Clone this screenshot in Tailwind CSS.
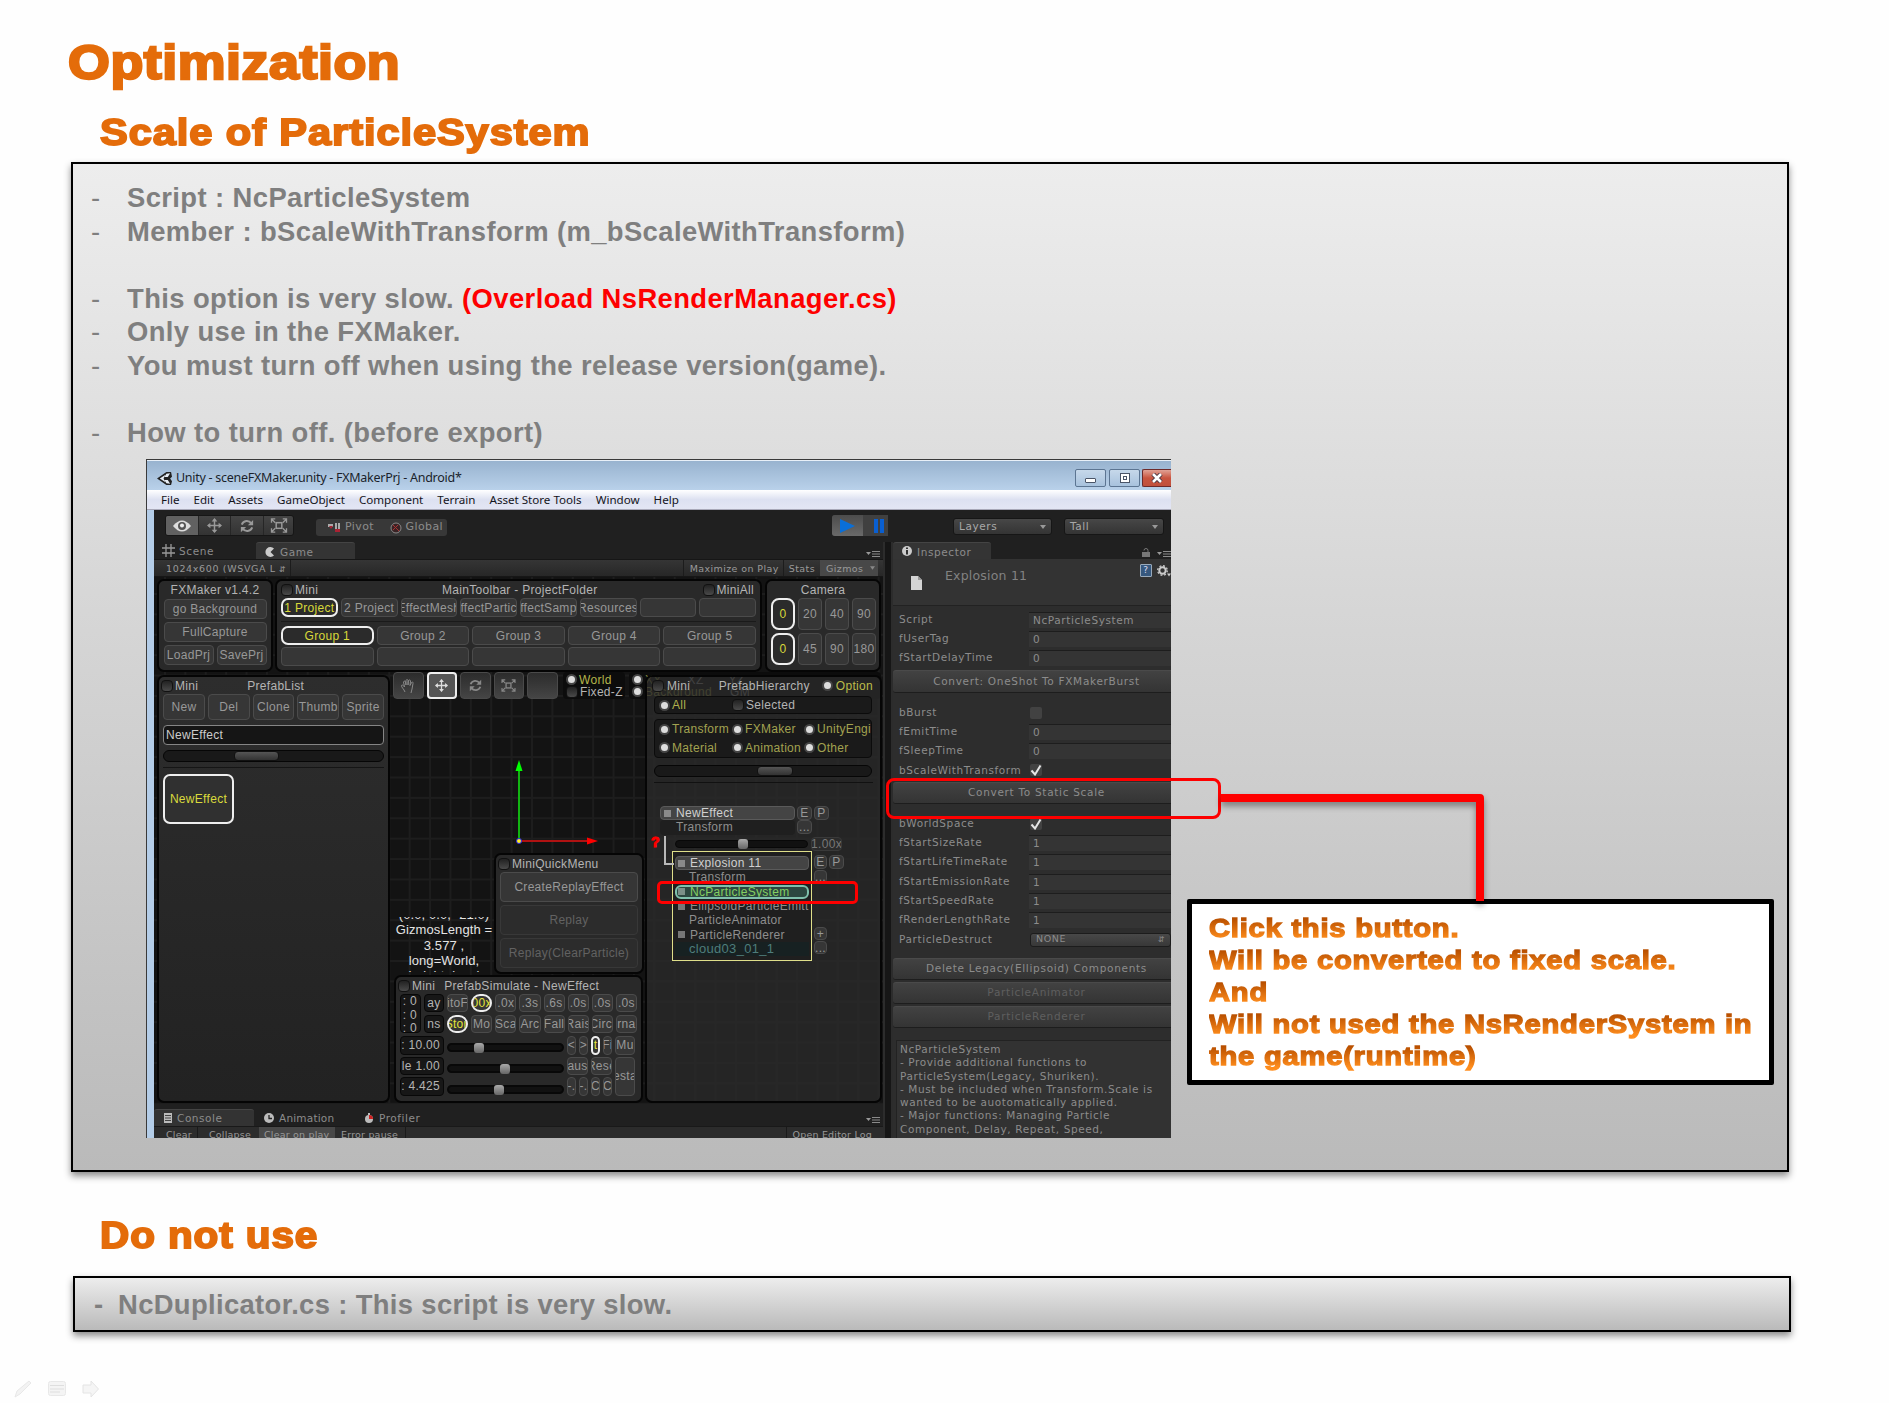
<!DOCTYPE html>
<html lang="en">
<head>
<meta charset="utf-8">
<title>Optimization</title>
<script src="https://cdn.jsdelivr.net/npm/@tailwindcss/browser@4"></script>
</head>
<body class="relative w-[1889px] h-[1403px] overflow-hidden bg-[#fefefe] font-['Liberation_Sans',sans-serif]">
<svg class="hidden">
  <symbol id="move" viewBox="0 0 16 16"><path d="M8 1v14M1 8h14" stroke="currentColor" stroke-width="1.6"/><path d="M8 0l3 3.6H5zM8 16l3-3.600H5zM0 8l3.600-3v6zM16 8l-3.600-3v6z" fill="currentColor"/></symbol>
  <symbol id="rot" viewBox="0 0 16 16"><path d="M2 6.500C4 1.500 10 1 13 5M14 9.500C12 14.500 6 15 3 11" fill="none" stroke="currentColor" stroke-width="2.200"/><path d="M15 1v6H9zM1 15V9h6z" fill="currentColor"/></symbol>
  <symbol id="scale" viewBox="0 0 18 16"><rect x="6" y="5" width="6" height="6" fill="none" stroke="currentColor" stroke-width="1.600"/><path d="M1 5V1h4M13 1h4v4M17 11v4h-4M5 15H1v-4M1 1l4 4M17 1l-4 4M17 15l-4-4M1 15l4-4" fill="none" stroke="currentColor" stroke-width="1.400"/></symbol>
  <symbol id="menu" viewBox="0 0 14 8"><path d="M0 2h5L2.500 5z" fill="#999"/><path d="M6 1.500h8M6 4h8M6 6.500h8" stroke="#8a8a8a" stroke-width="1.200"/></symbol>
  <symbol id="check" viewBox="0 0 12 12"><path d="M1.500 6.500L5 10.500 10.500 1.500" fill="none" stroke="#e6e6e6" stroke-width="2"/></symbol>
</svg>

<h1 class="ml-[68px] mt-[39px] h-[48px] w-max origin-left scale-x-[1.12] whitespace-nowrap text-[48px] leading-[48px] font-bold tracking-[0.5px] text-[#e46c0a] [-webkit-text-stroke:2.4px_#e46c0a]">Optimization</h1>
<h2 class="ml-[100px] mt-[26px] h-[40px] w-max origin-left scale-x-[1.155] whitespace-nowrap text-[36px] leading-[40px] font-bold tracking-[0.8px] text-[#e46c0a] [-webkit-text-stroke:1.8px_#e46c0a]">Scale of ParticleSystem</h2>

<section class="ml-[71px] mt-[9px] h-[1010px] w-[1718px] border-2 border-black bg-linear-to-b from-[#ededed] to-[#bababa] pt-[17px] shadow-[0_4px_7px_rgba(0,0,0,0.45)]">
  <ul class="h-[278px] whitespace-nowrap text-[27.400px] leading-[33.6px] font-bold tracking-[0.4px] text-[#7f7f7f] [&>li]:flex [&>li>i]:w-[36px] [&>li>i]:shrink-0 [&>li>i]:font-normal [&>li>i]:not-italic pl-[18px]">
    <li><i>-</i><span>Script : NcParticleSystem</span></li>
    <li><i>-</i><span>Member : bScaleWithTransform (m_bScaleWithTransform)</span></li>
    <li class="h-[33.6px]"></li>
    <li><i>-</i><span>This option is very slow. <span class="text-[#fe0000]">(Overload NsRenderManager.cs)</span></span></li>
    <li><i>-</i><span>Only use in the FXMaker.</span></li>
    <li><i>-</i><span>You must turn off when using the release version(game).</span></li>
    <li class="h-[33.6px]"></li>
    <li><i>-</i><span>How to turn off. (before export)</span></li>
  </ul>

  <!-- Unity editor window -->
  <div class="ml-[73px] flex h-[679px] w-[1025px] flex-col overflow-hidden border-l border-t border-[#3a3a3a] bg-[#b4cde8] whitespace-nowrap">
    <div class="flex h-[30px] shrink-0 items-center border-t border-[#e8f0f8] bg-linear-to-b from-[#98b3cf] to-[#b9d1ea] pl-[10px]">
      <svg class="mt-[5px] size-[15px]" viewBox="0 0 16 16"><path d="M0 8L10 1l5 0 1 5-2 2 2 3-1 4-5 0z" fill="#222"/><path d="M3 8l6-4-2 4 2 4zM10 3l4-.500-2.500 4H8zM10 13l4 .500-2.500-4H8z" fill="#e8eef5"/></svg>
      <span class="ml-[4px] mt-[6px] font-['Noto_Sans',sans-serif] text-[12.500px] tracking-[-0.27px] text-[#1a1f2b]">Unity - sceneFXMaker.unity - FXMakerPrj - Android*</span>
      <div class="ml-auto flex gap-[2px] pt-[5px]">
        <span class="flex h-[18px] w-[31px] items-center justify-center rounded-[2px] border border-[#5c7592] bg-linear-to-b from-[#c6d8ea] to-[#a8c2dd] pt-1"><i class="h-[5px] w-[11px] rounded-[1px] border border-[#4a5568] bg-white"></i></span>
        <span class="ml-px flex h-[18px] w-[31px] items-center justify-center rounded-[2px] border border-[#5c7592] bg-linear-to-b from-[#c6d8ea] to-[#a8c2dd]"><i class="flex size-[10px] items-center justify-center border border-[#4a5568] bg-white"><i class="h-1 w-1 border border-[#4a5568]"></i></i></span>
        <span class="flex h-[18px] w-[29px] items-center justify-center rounded-l-[2px] border border-r-0 border-[#6d2a2a] bg-linear-to-b from-[#e0a195] via-[#c8543f] to-[#c0503c]"><svg class="h-[10px] w-[12px]" viewBox="0 0 12 10"><path d="M2 1l8 8M10 1L2 9" stroke="#4a3540" stroke-width="4.500"/><path d="M2 1l8 8M10 1L2 9" stroke="#fff" stroke-width="2.600"/></svg></span>
      </div>
    </div>
    <div class="flex h-[20px] shrink-0 items-center gap-[14px] border-b border-[#a8a8b8] bg-linear-to-b from-white via-[#dde1f1] to-[#e3e6f4] pl-[14px] font-['Noto_Sans',sans-serif] text-[11.600px] tracking-[0px] text-[#15151c]">
      <span>File</span><span>Edit</span><span>Assets</span><span>GameObject</span><span>Component</span><span>Terrain</span><span>Asset Store Tools</span><span>Window</span><span>Help</span>
    </div>

    <div class="ml-[7px] flex h-[628px] flex-col bg-[#202020] font-['DejaVu_Sans',sans-serif] text-[11px] text-[#8c8c8c]">
      <!-- main toolbar -->
      <div class="flex h-[32px] shrink-0 items-start pl-[11px] pt-[5px]">
        <div class="flex h-[21px] w-[129px] overflow-hidden rounded-[3px] border border-[#161616] bg-linear-to-b from-[#444] to-[#333] text-[#999] [&>span]:flex [&>span]:w-[32.500px] [&>span]:shrink-0 [&>span]:items-center [&>span]:justify-center [&>span]:border-r [&>span]:border-[#262626]">
          <span class="bg-[#616161]"><svg class="h-[12px] w-[18px]" viewBox="0 0 18 12"><path d="M0 6Q9-5 18 6 9 17 0 6z" fill="#ddd"/><circle cx="9" cy="6" r="4" fill="#555"/><circle cx="9" cy="5.500" r="2" fill="#eee"/></svg></span>
          <span><svg class="size-[15px]"><use href="#move"/></svg></span>
          <span><svg class="size-[14px]"><use href="#rot"/></svg></span>
          <span><svg class="h-[15px] w-[18px]"><use href="#scale"/></svg></span>
        </div>
        <div class="ml-[22px] mt-[4px] flex h-[17px] w-[131px] items-center rounded-[3px] bg-[#383838] text-[11px] tracking-[0.4px]">
          <svg class="ml-[12px] h-[10px] w-[13px]" viewBox="0 0 13 10"><path d="M0 1h5v3H0zM7 0h2v6H7zM10 0h2v6h-2z" fill="#aaa"/><path d="M1 3h4L3 6zM7 6h5v3H7z" fill="#a23"/></svg>
          <span class="ml-[4px]">Pivot</span>
          <svg class="ml-auto size-[12px]" viewBox="0 0 12 12"><circle cx="6" cy="6" r="5" fill="#3a2224" stroke="#8a8a8a"/><path d="M3 3l6 6M3 8l5-5" stroke="#a33"/></svg>
          <span class="ml-[4px] mr-[4px]">Global</span>
        </div>
        <div class="ml-[385px] flex h-[21px] w-[56px] overflow-hidden rounded-l-[3px] bg-[#404040]">
          <span class="flex w-[31px] items-center justify-center bg-linear-to-b from-[#4c4c4c] to-[#6a6a6a]"><svg class="h-[14px] w-[15px]" viewBox="0 0 15 14"><path d="M0 0l15 7-15 7z" fill="#0a6fd8"/></svg></span>
          <span class="flex w-[25px] items-center justify-center gap-[2px] pl-[7px]"><i class="h-[14px] w-[4px] bg-[#0a5fd0]"></i><i class="h-[14px] w-[4px] bg-[#0a5fd0]"></i></span>
        </div>
        <div class="ml-[65px] mt-[3px] flex h-[17px] w-[99px] items-center justify-between rounded-[3px] border border-[#161616] bg-linear-to-b from-[#474747] to-[#343434] px-[5px] text-[10.500px] tracking-[0.6px] text-[#a8a8a8]">Layers<svg class="h-[4px] w-[6px]" viewBox="0 0 6 4"><path d="M0 0h6L3 4z" fill="#999"/></svg></div>
        <div class="ml-[12px] mt-[3px] flex h-[17px] w-[100px] items-center justify-between rounded-[3px] border border-[#161616] bg-linear-to-b from-[#474747] to-[#343434] px-[5px] text-[10.500px] tracking-[0.6px] text-[#a8a8a8]">Tall<svg class="h-[4px] w-[6px]" viewBox="0 0 6 4"><path d="M0 0h6L3 4z" fill="#999"/></svg></div>
      </div>

      <div class="flex h-[596px]">
        <!-- game column -->
        <div class="flex w-[729px] shrink-0 flex-col">
          <div class="flex h-[17px] shrink-0 items-end text-[10.500px] tracking-[0.6px]">
            <div class="flex h-[17px] w-[102px] items-center pl-[8px] pt-[2px]"><svg class="-mt-[2px] mr-[4px] size-[13px]" viewBox="0 0 13 13"><path d="M4 0v13M9 0v13M0 4h13M0 9h13" stroke="#999" stroke-width="1.300"/></svg>Scene</div>
            <div class="flex h-[17px] w-[99px] items-center rounded-t-[3px] border-t border-[#444] bg-[#343434] pl-[9px] pt-[3px]"><svg class="-mt-[2px] mr-[5px] size-[10px]" viewBox="0 0 10 10"><path d="M9 1.500A5 5 0 1 0 9 8.500L5.500 5z" fill="#ccc"/></svg>Game</div>
            <svg class="mb-[1px] ml-auto mr-[3px] h-[8px] w-[14px]"><use href="#menu"/></svg>
          </div>
          <div class="flex h-[18px] shrink-0 items-stretch border-y border-[#161616] bg-linear-to-b from-[#353535] to-[#272727] pr-[5px] text-[9.500px] leading-[17px] tracking-[0.4px] text-[#9a9a9a]">
            <span class="w-[137px] border-r border-[#1c1c1c] pl-[12px] tracking-[0.65px]">1024x600 (WSVGA L<span class="ml-[3px] text-[8px]">&#8693;</span></span>
            <span class="ml-auto border-l border-[#1c1c1c] pl-[6px] pr-[4px]">Maximize on Play</span>
            <span class="border-l border-[#1c1c1c] px-[5px]">Stats</span>
            <span class="flex w-[58px] items-center bg-[#484848] pl-[6px]">Gizmos<svg class="ml-auto mr-[3px] h-[4px] w-[5px]" viewBox="0 0 6 4"><path d="M0 0h6L3 4z" fill="#888"/></svg></span>
          </div>

          <!-- game view: free-floating tool windows -->
          <div class="relative h-[527px] shrink-0 overflow-hidden bg-[#131313] bg-[linear-gradient(#1d1d1d_2px,transparent_2px),linear-gradient(90deg,#1d1d1d_2px,transparent_2px)] bg-[size:20.400px_20.400px] bg-[position:10px_16px] font-['Liberation_Sans',sans-serif] text-[12px] tracking-[0.3px] text-[#b4b4b4] [&_button]:overflow-hidden [&_button]:rounded-[4px] [&_button]:border [&_button]:border-[#4b4b4b] [&_button]:bg-[#363636] [&_button]:flex [&_button]:items-center [&_button]:justify-center [&_button]:whitespace-nowrap [&_button]:text-[#989898] [&_section]:rounded-[7px] [&_section]:border-2 [&_section]:border-[#050505] [&_section]:bg-[#292929] [&_.tog]:size-[12px] [&_.tog]:shrink-0 [&_.tog]:rounded-[4px] [&_.tog]:border [&_.tog]:border-[#111] [&_.tog]:bg-linear-to-b [&_.tog]:from-[#222] [&_.tog]:to-[#4a4a4a] [&_.dot]:size-[11px] [&_.dot]:shrink-0 [&_.dot]:rounded-full [&_.dot]:border-2 [&_.dot]:border-[#444] [&_.dot]:bg-[#ddd]">

            <section class="absolute left-[3px] top-[2px] flex h-[93px] w-[116px] flex-col items-center px-[4px] leading-[18px]">
              <span>FXMaker v1.4.2</span>
              <button class="h-[20px] w-[103px]">go Background</button>
              <button class="mt-[3px] h-[20px] w-[103px]">FullCapture</button>
              <div class="mt-[3px] flex gap-[3px]"><button class="h-[20px] w-[50px]">LoadPrj</button><button class="h-[20px] w-[50px]">SavePrj</button></div>
            </section>

            <section class="absolute left-[121px] top-[2px] h-[93px] w-[487px] px-[4px]">
              <div class="flex h-[17px] items-center"><i class="tog"></i><span class="ml-[2px] w-[147px]">Mini</span><span>MainToolbar - ProjectFolder</span><i class="tog ml-auto"></i><span class="mx-[2px]">MiniAll</span></div>
              <div class="grid h-[19px] grid-cols-8 gap-x-[3px]">
                <button class="border-2! border-[#eee]! rounded-[7px]! text-[#d8d83a]! bg-[#2b2b2b]!">1 Project</button><button>2 Project</button><button>EffectMesh</button><button>ffectPartic</button><button>ffectSamp</button><button>Resources</button><button></button><button></button>
              </div>
              <div class="mt-[4px] h-[5px] border-t border-[#1a1a1a]"></div>
              <div class="grid grid-cols-5 gap-x-[3px] gap-y-[2px] [&>button]:h-[19px]">
                <button class="border-2! border-[#eee]! rounded-[7px]! text-[#d8d83a]! bg-[#2b2b2b]!">Group 1</button><button>Group 2</button><button>Group 3</button><button>Group 4</button><button>Group 5</button>
                <button></button><button></button><button></button><button></button><button></button>
              </div>
            </section>

            <section class="absolute left-[611px] top-[2px] h-[93px] w-[116px] px-[4px] text-center">
              <div class="h-[17px] leading-[18px]">Camera</div>
              <div class="grid grid-cols-[repeat(4,24px)] gap-[3px] [&>button]:h-[32px]">
                <button class="border-2! border-[#eee]! rounded-[8px]! text-[#d8d83a]! bg-[#2b2b2b]!">0</button><button>20</button><button>40</button><button>90</button>
                <button class="border-2! border-[#eee]! rounded-[8px]! text-[#d8d83a]! bg-[#2b2b2b]!">0</button><button>45</button><button>90</button><button>180</button>
              </div>
            </section>

            <section class="absolute left-[3px] top-[98px] h-[428px] w-[233px] bg-linear-to-b! from-[#2d2d2d] to-[#222] px-[4px]">
              <div class="flex h-[17px] items-center"><i class="tog -ml-[2px]"></i><span class="ml-[2px]">Mini</span><span class="ml-[49px]">PrefabList</span></div>
              <div class="grid h-[26px] grid-cols-5 gap-[3px]"><button>New</button><button>Del</button><button>Clone</button><button>Thumb</button><button>Sprite</button></div>
              <div class="mt-[5px] h-[20px] rounded-[4px] border border-[#858585] bg-[#151515] pl-[2px] leading-[18px] text-[#ccc]">NewEffect</div>
              <div class="mt-[5px] h-[12px] rounded-full border border-[#060606] bg-[#191919] pl-[70px]"><i class="block h-[10px] w-[45px] rounded-[4px] border border-[#111] bg-linear-to-b from-[#555] to-[#333]"></i></div>
              <div class="mt-[5px] h-[7px] border-t border-[#151515]"></div>
              <button class="h-[50px] w-[71px] rounded-[7px]! border-2! border-[#eee]! bg-[#303030]! text-[#dada3c]!">NewEffect</button>
            </section>

            <div class="absolute left-[239px] top-[95px] flex gap-[3px] text-[#888] [&>span]:flex [&>span]:h-[27px] [&>span]:w-[30.500px] [&>span]:items-center [&>span]:justify-center [&>span]:rounded-[4px] [&>span]:border [&>span]:border-[#4a4a4a] [&>span]:bg-linear-to-b [&>span]:from-[#2c2c2c] [&>span]:to-[#454545]">
              <span><svg class="size-[16px]" viewBox="0 0 16 16"><path d="M5 14C4 11 1 9 1.500 7.500S4 8 4.500 9L3.500 4C4 2.500 5.500 3 5.500 4L6 7V2.500c.500-1.500 2-1 2 0V7l.500-4.500c.500-1 2-.500 2 .500L10 7.500l1.500-3c1-1 2 0 1.500 1L12 11l-1 4" fill="none" stroke="#8a8a8a"/></svg></span>
              <span class="border-2! border-[#eee]! bg-[#555]! bg-none! text-[#ddd]"><svg class="size-[13px]"><use href="#move"/></svg></span>
              <span><svg class="size-[13px]"><use href="#rot"/></svg></span>
              <span><svg class="h-[13px] w-[15px]"><use href="#scale"/></svg></span>
              <span></span>
            </div>
            <div class="absolute left-[409px] top-[95px] flex h-[27px] w-[62px] flex-col justify-center rounded-[4px] bg-[#0c0c0c] pl-[3px] leading-[12px] [&>div]:flex [&>div]:items-center [&>div]:gap-[2px]"><div class="text-[#b5b54a]"><i class="dot"></i>World</div><div><i class="tog"></i>Fixed-Z</div></div>
            <div class="absolute left-[475px] top-[95px] flex h-[27px] w-[252px] flex-col justify-center rounded-[4px] bg-[#0c0c0c] pl-[3px] leading-[12px] [&>div]:flex [&>div]:items-center [&>div]:gap-[2px]"><div class="text-[#85853c]"><i class="dot"></i>XY<span class="ml-[24px] text-[#999]">XZ</span><span class="ml-[23px] text-[#999]">YZ</span></div><div class="text-[#9a9a45]"><i class="dot"></i>Background<span class="ml-[16px] text-[#999]">GM</span></div></div>

            <!-- transform gizmo -->
            <svg class="absolute left-[358px] top-[182px] h-[90px] w-[90px]" viewBox="0 0 90 90"><path d="M7 82V10" stroke="#12b512" stroke-width="2"/><path d="M7 1l3.500 11h-7z" fill="#0f0"/><path d="M7 82h70" stroke="#b01212" stroke-width="2"/><path d="M86 82l-11 3.500v-7z" fill="#f00"/><circle cx="7" cy="82" r="2.500" fill="#fe2" stroke="#22f"/></svg>

            <div class="absolute left-[239px] top-[340px] flex h-[55px] w-[102px] flex-col items-center overflow-hidden font-['Liberation_Sans',sans-serif] text-[13px] leading-[15.300px] tracking-[0.1px] text-[#e4e4e4]"><div class="-mt-[10px]">(0.0, 0.0, -21.0)</div><div>GizmosLength =</div><div>3.577 ,</div><div>long=World,</div><div>height=local</div></div>

            <section class="absolute left-[340px] top-[276px] flex h-[121px] w-[150px] flex-col px-[4px]">
              <div class="flex h-[17px] items-center"><i class="tog -ml-[2px]"></i><span class="ml-[2px]">MiniQuickMenu</span></div>
              <button class="h-[30px]">CreateReplayEffect</button>
              <button class="mt-[3px] h-[30px] border-[#383838]! bg-[#2c2c2c]! text-[#626262]!">Replay</button>
              <button class="mt-[3px] h-[30px] border-[#383838]! bg-[#2c2c2c]! text-[#626262]!">Replay(ClearParticle)</button>
            </section>

            <section class="absolute left-[240px] top-[398px] h-[128px] w-[249px] px-[4px]">
              <div class="flex h-[17px] items-center"><i class="tog -ml-[2px]"></i><span class="ml-[2px]">Mini</span><span class="ml-[9px]">PrefabSimulate - NewEffect</span></div>
              <div class="flex gap-[3px]">
                <div class="flex h-[39px] w-[21px] flex-col items-end rounded-[4px] border border-[#080808] bg-[#171717] pr-[3px] leading-[13.500px]"><span>: 0</span><span>: 0</span><span>: 0</span></div>
                <div class="flex w-[20px] flex-col gap-[3px] text-center leading-[16px] [&>span]:h-[18px] [&>span]:rounded-[4px] [&>span]:border [&>span]:border-[#080808] [&>span]:bg-[#171717]"><span>ay</span><span>ns</span></div>
                <div class="grid flex-1 grid-cols-8 gap-x-[3px] gap-y-[3px] [&>button]:h-[18px]">
                  <button>itoF</button><button class="rounded-[9px]! border-2! border-[#eee]! text-[#e4e43a]!">00x</button><button>.0x</button><button>.3s</button><button>.6s</button><button>.0s</button><button>.0s</button><button>.0s</button>
                  <button class="rounded-[9px]! border-2! border-[#eee]! text-[#e4e43a]!">Stop</button><button>Mo</button><button>Sca</button><button>Arc</button><button>Fall</button><button>Rais</button><button>Circl</button><button>rna</button>
                </div>
              </div>
              <div class="mt-[3px] flex gap-[3px]">
                <div class="flex w-[44px] flex-col gap-[2px] text-right leading-[16px] [&>span]:h-[18.500px] [&>span]:rounded-[4px] [&>span]:border [&>span]:border-[#080808] [&>span]:bg-[#171717] [&>span]:pr-[3px]"><span>: 10.00</span><span>le 1.00</span><span>: 4.425</span></div>
                <div class="flex w-[117px] flex-col gap-[12px] pt-[7px] [&>div]:h-[9px] [&>div]:rounded-full [&>div]:border-2 [&>div]:border-[#080808] [&>div]:bg-[#111] [&_i]:-mt-[2px] [&_i]:block [&_i]:size-[10px] [&_i]:rounded-[3px] [&_i]:bg-linear-to-b [&_i]:from-[#aaa] [&_i]:to-[#666]">
                  <div class="pl-[25px]"><i></i></div><div class="pl-[51px]"><i></i></div><div class="pl-[45px]"><i></i></div>
                </div>
                <div class="grid flex-1 grid-cols-[9px_9px_9px_9px_20px] gap-x-[3px] gap-y-[2px] [&>button]:h-[18.500px]">
                  <button>&lt;</button><button>&gt;</button><button class="rounded-full! border-2! border-[#eee]! text-[#e4e43a]!">t</button><button>Fi</button><button>Mu</button>
                  <button class="col-span-2">aus</button><button class="col-span-2">Rese</button><button class="row-span-2 h-[39px]!">esta</button>
                  <button>-.</button><button>-.</button><button>C</button><button>C</button>
                </div>
              </div>
            </section>

            <!-- prefab hierarchy -->
            <section class="absolute left-[491px] top-[98px] h-[428px] w-[237px] bg-[#2a2a2a]/80! px-[7px]">
              <div class="flex h-[17px] items-center"><i class="tog -ml-[2px]"></i><span class="ml-[3px] w-[56px]">Mini</span><span>PrefabHierarchy</span><i class="dot ml-[12px]"></i><span class="ml-[3px] text-[#bcbc4a]">Option</span></div>
              <div class="mt-[2px] flex h-[18px] w-[218px] items-center rounded-[4px] border border-[#0b0b0b] bg-[#1a1a1a] pl-[4px]"><i class="dot"></i><span class="ml-[2px] w-[60px] text-[#b0b04c]">All</span><i class="tog"></i><span class="ml-[2px]">Selected</span></div>
              <div class="mt-[5px] grid h-[39px] w-[218px] grid-cols-[73px_72px_68px] items-center overflow-hidden rounded-[4px] border border-[#0b0b0b] bg-[#1a1a1a] pl-[4px] text-[#a2a250] [&>div]:flex [&>div]:items-center [&>div]:gap-[2px] [&>div]:overflow-hidden">
                <div><i class="dot"></i>Transform</div><div><i class="dot"></i>FXMaker</div><div><i class="dot"></i>UnityEngine</div>
                <div><i class="dot"></i>Material</div><div><i class="dot"></i>Animation</div><div><i class="dot"></i>Other</div>
              </div>
              <div class="mt-[7px] h-[12px] w-[218px] rounded-full border border-[#060606] bg-[#191919] pl-[102px]"><i class="block h-[10px] w-[36px] rounded-[4px] border border-[#111] bg-linear-to-b from-[#555] to-[#333]"></i></div>
              <div class="mt-[5px] h-[24px] border-t border-[#111]"></div>
              <div class="ml-[6px] flex gap-[2px] leading-[12px]">
                <div class="flex h-[14px] w-[135px] items-center gap-[5px] rounded-[4px] border border-[#5a5a5a] bg-[#444] pl-[3px] text-[#d0d0d0]"><i class="size-[7px] bg-[#8a8a8a]"></i>NewEffect</div>
                <button class="h-[14px] w-[15px]">E</button><button class="h-[14px] w-[15px]">P</button>
              </div>
              <div class="ml-[6px] flex gap-[2px] leading-[14px]"><div class="h-[15px] w-[135px] rounded-[4px] bg-[#1f1f1f] pl-[16px] text-[#8e8e8e]">Transform</div><button class="h-[14px] w-[15px]">...</button></div>
              <div class="ml-[21px] mt-[2px] flex h-[14px] items-center gap-[3px]"><div class="h-[8px] w-[133px] rounded-full border border-[#080808] bg-[#111] pl-[62px]"><i class="-mt-[2px] block size-[10px] rounded-[3px] bg-linear-to-b from-[#aaa] to-[#666]"></i></div><button class="h-[14px] w-[31px] border-[#393939]! bg-[#2b2b2b]! text-[#777]!">1.00x</button></div>
              <div class="ml-[18px] flex gap-[2px]">
                <div class="h-[110px] w-[140px] border border-[#dfdf8a] bg-[#1f1f1f] px-[2px] pt-[4px] leading-[14px] text-[#8e8e8e] [&>div]:h-[14.300px] [&>div]:pl-[14px] [&>div]:overflow-hidden">
                  <div class="flex items-center gap-[5px] rounded-[4px] border border-[#5a5a5a] bg-[#444] pl-[2px]! text-[#d0d0d0]"><i class="size-[7px] bg-[#8a8a8a]"></i>Explosion 11</div>
                  <div>Transform</div>
                  <div class="flex items-center gap-[5px] rounded-[6px] border-2 border-[#7fc0ac] bg-[#2c4740] pl-[1px]! text-[#84cf62]"><i class="size-[7px] bg-[#7b8f88]"></i>NcParticleSystem</div>
                  <div class="flex items-center gap-[5px] pl-[3px]!"><i class="size-[7px] shrink-0 bg-[#777]"></i>EllipsoidParticleEmitt</div>
                  <div>ParticleAnimator</div>
                  <div class="flex items-center gap-[5px] pl-[3px]!"><i class="size-[7px] bg-[#777]"></i>ParticleRenderer</div>
                  <div class="bg-[#172122] text-[13px] text-[#4e7d7b]">cloud03_01_1</div>
                </div>
                <div class="flex flex-col gap-[1px] pt-[4px]"><div class="flex gap-[2px]"><button class="h-[14px] w-[13px]">E</button><button class="h-[14px] w-[15px]">P</button></div><button class="h-[13px] w-[13px]">...</button><button class="mt-[43px] h-[13px] w-[13px]">+</button><button class="h-[13px] w-[13px]">...</button></div>
              </div>
            </section>
            <svg class="absolute left-[497px] top-[259px] h-[32px] w-[24px]" viewBox="0 0 24 32"><path d="M14 0v28h9" fill="none" stroke="#b8b8b8" stroke-width="2"/></svg>
            <b class="absolute left-[497px] top-[257px] text-[14px] leading-[16px] text-[#f00] [-webkit-text-stroke:1px_#f00]">?</b>
          </div>

          <div class="flex h-[22px] shrink-0 items-end text-[10.500px] tracking-[0.55px]">
            <div class="flex h-[17px] w-[100px] items-center rounded-t-[3px] border-t border-[#444] bg-[#333] pl-[10px] pt-[2px]"><svg class="-mt-[2px] mr-[5px] h-[10px] w-[8px]" viewBox="0 0 8 10"><path d="M0 0h8v10H0z" fill="#bbb"/><path d="M1 2.500h6M1 5h6M1 7.500h6" stroke="#444"/></svg>Console</div>
            <div class="flex h-[17px] w-[97px] items-center pl-[10px] pt-[2px] tracking-[0.2px]"><svg class="-mt-[2px] mr-[5px] size-[10px]" viewBox="0 0 10 10"><circle cx="5" cy="5" r="5" fill="#bbb"/><path d="M5 2v3.500h3" fill="none" stroke="#222" stroke-width="1.300"/></svg>Animation</div>
            <div class="flex h-[17px] items-center pl-[14px] pt-[2px]"><svg class="-mt-[2px] mr-[6px] h-[10px] w-[8px]" viewBox="0 0 8 10"><circle cx="4" cy="6" r="4" fill="#bbb"/><path d="M3 0h2v2H3z" fill="#bbb"/><path d="M4 6V2a4 4 0 0 1 4 4z" fill="#c22"/></svg>Profiler</div>
            <svg class="mb-[2px] ml-auto mr-[3px] h-[8px] w-[14px]"><use href="#menu"/></svg>
          </div>
          <div class="flex h-[12px] overflow-hidden border-t border-[#191919] bg-[#2c2c2c] pr-[5px] text-[9.500px] leading-[16px] tracking-[0.2px] text-[#999]">
            <span class="w-[44px] border-r border-[#1a1a1a] pl-[12px]">Clear</span><span class="w-[61px] pl-[11px]">Collapse</span><span class="w-[76px] bg-[#484848] pl-[5px]">Clear on play</span><span class="w-[71px] border-r border-[#1a1a1a] pl-[6px]">Error pause</span>
            <span class="ml-auto border-l border-[#1a1a1a] px-[6px]">Open Editor Log</span>
          </div>
        </div>

        <div class="w-[10px] shrink-0 border-x-2 border-[#2c2c2c] bg-[#161616]"></div>

        <!-- inspector -->
        <div class="flex w-[278px] shrink-0 flex-col text-[10.500px] tracking-[0.6px]">
          <div class="flex h-[17px] shrink-0 items-end">
            <div class="flex h-[17px] w-[98px] items-center rounded-t-[3px] border-t border-[#444] bg-[#343434] pl-[9px] pt-[3px]"><svg class="-mt-[3px] mr-[5px] size-[10px]" viewBox="0 0 10 10"><circle cx="5" cy="5" r="5" fill="#ccc"/><path d="M5 1.500v1.500M5 4v4.500" stroke="#222" stroke-width="1.800"/></svg>Inspector</div>
            <svg class="mb-[2px] ml-auto mr-[7px] h-[9px] w-[8px]" viewBox="0 0 8 9"><path d="M0 4h8v5H0z" fill="#777"/><path d="M2 2.500a2 2 0 0 1 4 0V4" fill="none" stroke="#777"/></svg>
            <svg class="mb-[1px] h-[8px] w-[14px]"><use href="#menu"/></svg>
          </div>
          <div class="flex h-[47px] shrink-0 items-start border-b border-[#222] bg-[#333]">
            <svg class="ml-[18px] mt-[17px] h-[14px] w-[11px]" viewBox="0 0 11 14"><path d="M0 0h7l4 4v10H0z" fill="#d4d4d4"/><path d="M7 0v4h4" fill="#999"/></svg>
            <span class="ml-[23px] mt-[9px] text-[12.500px] leading-[15px] tracking-[0.2px] text-[#828282]">Explosion 11</span>
            <span class="ml-auto mt-[5px] flex h-[13px] w-[12px] items-center justify-center rounded-[1px] border border-[#9ab] bg-[#36587e] text-[9px] text-[#dde]">?</span>
            <svg class="ml-[5px] mt-[6px] h-[12px] w-[14px]" viewBox="0 0 14 12"><circle cx="5.500" cy="5.500" r="3.200" fill="none" stroke="#ccc" stroke-width="2"/><circle cx="5.500" cy="5.500" r="4.800" fill="none" stroke="#ccc" stroke-width="1.300" stroke-dasharray="1.900 1.870"/><path d="M10 8.500h4l-2 3z" fill="#ccc"/></svg>
          </div>
          <div class="flex h-[532px] flex-col overflow-hidden bg-[#2d2d2d] pt-[4px] [&_.row]:flex [&_.row]:h-[19.300px] [&_.row]:shrink-0 [&_.row]:items-center [&_.row]:pl-[6px] [&_.row>span]:w-[130px] [&_.row>span]:shrink-0 [&_.row>b]:h-[16px] [&_.row>b]:w-[142px] [&_.row>b]:border-t [&_.row>b]:border-[#1d1d1d] [&_.row>b]:bg-[#343434] [&_.row>b]:pl-[4px] [&_.row>b]:font-normal [&_.row>b]:leading-[15px] [&_.row>i]:ml-px [&_.row>i]:flex [&_.row>i]:size-[12px] [&_.row>i]:rounded-[2px] [&_.row>i]:bg-[#424242] [&_.btn]:flex [&_.btn]:shrink-0 [&_.btn]:items-center [&_.btn]:justify-center [&_.btn]:rounded-l-[3px] [&_.btn]:border-y [&_.btn]:border-b-[#1d1d1d] [&_.btn]:border-t-[#4a4a4a] [&_.btn]:bg-linear-to-b [&_.btn]:from-[#424242] [&_.btn]:to-[#343434] [&_.btn]:pl-[9px] [&_.btn]:tracking-[0.7px]">
            <div class="row"><span>Script</span><b>NcParticleSystem</b></div>
            <div class="row"><span>fUserTag</span><b>0</b></div>
            <div class="row"><span>fStartDelayTime</span><b>0</b></div>
            <div class="btn mt-[2px] h-[23px]">Convert: OneShot To FXMakerBurst</div>
            <div class="row mt-[10px]"><span>bBurst</span><i></i></div>
            <div class="row"><span>fEmitTime</span><b>0</b></div>
            <div class="row"><span>fSleepTime</span><b>0</b></div>
            <div class="row"><span>bScaleWithTransform</span><i><svg class="size-[12px]"><use href="#check"/></svg></i></div>
            <div class="btn mt-[2px] h-[22px]">Convert To Static Scale</div>
            <div class="row mt-[10px]"><span>bWorldSpace</span><i><svg class="size-[12px]"><use href="#check"/></svg></i></div>
            <div class="row"><span>fStartSizeRate</span><b>1</b></div>
            <div class="row"><span>fStartLifeTimeRate</span><b>1</b></div>
            <div class="row"><span>fStartEmissionRate</span><b>1</b></div>
            <div class="row"><span>fStartSpeedRate</span><b>1</b></div>
            <div class="row"><span>fRenderLengthRate</span><b>1</b></div>
            <div class="row"><span>ParticleDestruct</span><div class="ml-px flex h-[14px] w-[141px] items-center justify-between rounded-[3px] border border-[#1c1c1c] bg-linear-to-b from-[#484848] to-[#383838] px-[5px] text-[9.500px]">NONE<span class="text-[8px]">&#8693;</span></div></div>
            <div class="btn mt-[9px] h-[22px]">Delete Legacy(Ellipsoid) Components</div>
            <div class="btn mt-[2px] h-[22px] text-[#5f5f5f]">ParticleAnimator</div>
            <div class="btn mt-[2px] h-[22px] text-[#5f5f5f]">ParticleRenderer</div>
            <div class="ml-[3px] mt-[12px] flex-1 border-t border-l border-[#222] bg-[#323232] pl-[3px] pt-[2px] leading-[13.250px]">NcParticleSystem<br>- Provide additional functions to<br>ParticleSystem(Legacy, Shuriken).<br>- Must be included when Transform.Scale is<br>wanted to be auotomatically applied.<br>- Major functions: Managing Particle<br>Component, Delay, Repeat, Speed,<br>ScaleWithTransform</div>
          </div>
        </div>
      </div>
    </div>
  </div>
</section>

<h2 class="ml-[100px] mt-[44px] h-[40px] w-max origin-left scale-x-[1.125] whitespace-nowrap text-[36px] leading-[40px] font-bold tracking-[0.800px] text-[#e46c0a] [-webkit-text-stroke:1.800px_#e46c0a]">Do not use</h2>
<section class="ml-[73px] mt-[20px] flex h-[56px] w-[1718px] items-center border-2 border-black bg-linear-to-b from-[#ededed] to-[#bababa] pl-[19px] pt-[2px] text-[27.400px] font-bold tracking-[0.35px] text-[#7f7f7f] shadow-[0_4px_7px_rgba(0,0,0,0.45)]"><span class="w-[24px]">-</span><span>NcDuplicator.cs : This script is very slow.</span></section>

<!-- slide show controls -->
<div class="mt-[48px] flex items-center gap-[16px] pl-[14px]">
  <svg class="h-[18px] w-[18px]" viewBox="0 0 18 18"><path d="M1 17l2-6L15 1l2 2L6 14z" fill="#f3f3f3" stroke="#e8e8e8"/></svg>
  <svg class="h-[16px] w-[18px]" viewBox="0 0 18 16"><rect x=".5" y=".5" width="17" height="14" rx="2" fill="#f4f4f4" stroke="#e8e8e8"/><path d="M2 4.500h14M2 8h14M2 11h10" stroke="#dedede"/></svg>
  <svg class="h-[18px] w-[17px]" viewBox="0 0 17 18"><path d="M1 5h8V1l7.500 8L9 17v-4H1z" fill="#f5f5f5" stroke="#e4e4e4"/></svg>
</div>

<!-- annotations over the window -->
<div class="absolute left-[657px] top-[881px] h-[23px] w-[201px] rounded-[5px] border-3 border-[#fe0000]"></div>
<div class="absolute left-[886px] top-[778px] h-[41px] w-[335px] rounded-[8px] border-3 border-[#fe0000]"></div>
<div class="absolute left-[1187px] top-[899px] h-[186px] w-[587px] rounded-[2px] border-[5px] border-black bg-white pl-[17px] pt-[8px] text-[26.500px] font-bold tracking-[0.7px] whitespace-nowrap [&>p]:h-[32px] [&>p]:w-max [&>p]:origin-left [&>p]:scale-x-[1.1] [&>p]:bg-linear-to-b [&>p]:from-[#b84f00] [&>p]:from-20% [&>p]:to-[#ff8d1c] [&>p]:to-85% [&>p]:bg-clip-text [&>p]:leading-[32px] [&>p]:text-transparent [&>p]:[-webkit-text-stroke:1.400px_transparent]">
  <p>Click this button.</p><p>Will be converted to fixed scale.</p><p>And</p><p>Will not used the NsRenderSystem in</p><p>the game(runtime)</p>
</div>
<svg class="absolute left-[1221px] top-[790px] h-[125px] w-[275px] drop-shadow-[0_4px_3px_rgba(0,0,0,0.4)]" viewBox="0 0 275 125"><path d="M0 8h259v103" fill="none" stroke="#fe0000" stroke-width="8" stroke-linejoin="round"/></svg>
</body>
</html>
